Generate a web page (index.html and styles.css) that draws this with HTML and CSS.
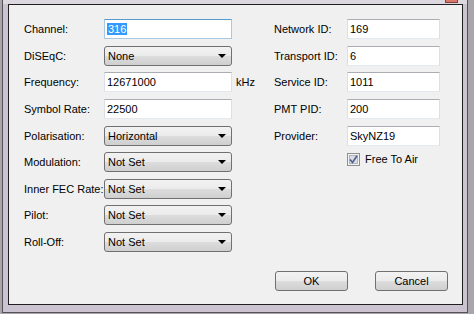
FILE: index.html
```html
<!DOCTYPE html>
<html>
<head>
   <meta charset="utf-8" />
   <title>Edit Channel</title>
   <link rel="stylesheet" href="styles.css">
</head>
<body>
   <div class="window">
      <div class="titlebar"><span class="close"></span></div>
      <div class="client">
         <div class="form">
            <div class="left grid">
               <label>Channel:</label><div class="text focused"><span class="sel">316</span></div><span></span>
               <label>DiSEqC:</label><div class="combo">None</div><span></span>
               <label>Frequency:</label><div class="text">12671000</div><span class="unit">kHz</span>
               <label>Symbol Rate:</label><div class="text">22500</div><span></span>
               <label>Polarisation:</label><div class="combo">Horizontal</div><span></span>
               <label>Modulation:</label><div class="combo">Not Set</div><span></span>
               <label>Inner FEC Rate:</label><div class="combo">Not Set</div><span></span>
               <label>Pilot:</label><div class="combo">Not Set</div><span></span>
               <label>Roll-Off:</label><div class="combo">Not Set</div><span></span>
            </div>
            <div class="right grid">
               <label>Network ID:</label><div class="text">169</div>
               <label>Transport ID:</label><div class="text">6</div>
               <label>Service ID:</label><div class="text">1011</div>
               <label>PMT PID:</label><div class="text">200</div>
               <label>Provider:</label><div class="text">SkyNZ19</div>
               <span></span>
               <div class="check">
                  <svg width="13" height="13" viewBox="0 0 13 13">
                     <rect x="0.5" y="0.5" width="12" height="12" fill="#f4f4f4" stroke="#8e8f8f"/>
                     <rect x="2.5" y="2.5" width="8" height="8" fill="#dcdde0" stroke="#b0b3b8"/>
                     <path d="M3 6.5 L5.5 9.5 L10 2.8" fill="none" stroke="#4a5f97" stroke-width="1.6"/>
                  </svg>
                  <span>Free To Air</span>
               </div>
            </div>
         </div>
         <div class="buttons">
            <button>OK</button>
            <button>Cancel</button>
         </div>
      </div>
   </div>
</body>
</html>
```

FILE: styles.css
```css
body { margin: 0; background: #a8a6aa; font-family: "Liberation Sans", Arial, sans-serif; font-size: 11px; color: #000; }

.window { margin-left: 2px; width: 455px; height: 312px; background: #cbc3cf; border-left: 1px solid #55505a; border-right: 1px solid #55505a; border-bottom: 1px solid #55505a; padding: 0 4px 0 5px; }

.titlebar { height: 4px; display: flex; background: #ddd8e0; margin: 0 -4px 0 -5px; }
.close { margin-left: 442px; width: 11px; height: 2px; background: #d8786a; border: 1px solid #8a4038; border-top: none; }

.client { height: 301px; box-sizing: border-box; border: 1px solid #1f1f1f; background: #f0f0f0; display: flex; flex-direction: column; padding: 11px 0 0 15px; }

.form { display: flex; }
.grid { display: grid; grid-auto-rows: 26.6px; align-items: center; }
.left { grid-template-columns: 80px 128px 42px; }
.right { grid-template-columns: 73px 93px; }

label { white-space: nowrap; }
.unit { padding-left: 4px; }

.text { height: 20px; box-sizing: border-box; background: #fff; border: 1px solid #dbdfe6; border-top-color: #abadb3; border-bottom-color: #e3e9ef; padding: 3px 0 0 2px; line-height: 13px; }
.text.focused { border-color: #a9c9e2; border-top-color: #5b9ac8; }
.sel { background: #3399ff; color: #fff; padding: 0 1px; }

.combo { position: relative; height: 20px; box-sizing: border-box; border: 1px solid #707070; border-radius: 3px; background: linear-gradient(#f2f2f2, #ebebeb 50%, #dddddd 50%, #cfcfcf); padding: 3px 0 0 3px; line-height: 13px; }
.combo::after { content: ""; position: absolute; right: 5px; top: 7px; border-left: 4px solid transparent; border-right: 4px solid transparent; border-top: 4px solid #000; }

.check { display: flex; align-items: center; gap: 5px; align-self: start; margin-top: 4px; }
.check svg { display: block; }

.buttons { margin-top: auto; margin-bottom: 13px; display: flex; justify-content: flex-end; gap: 27px; padding-right: 14px; }
button { width: 73px; height: 20px; font: inherit; color: #000; border: 1px solid #707070; border-radius: 3px; background: linear-gradient(#f2f2f2, #ebebeb 50%, #dddddd 50%, #cfcfcf); padding: 0; }
```
